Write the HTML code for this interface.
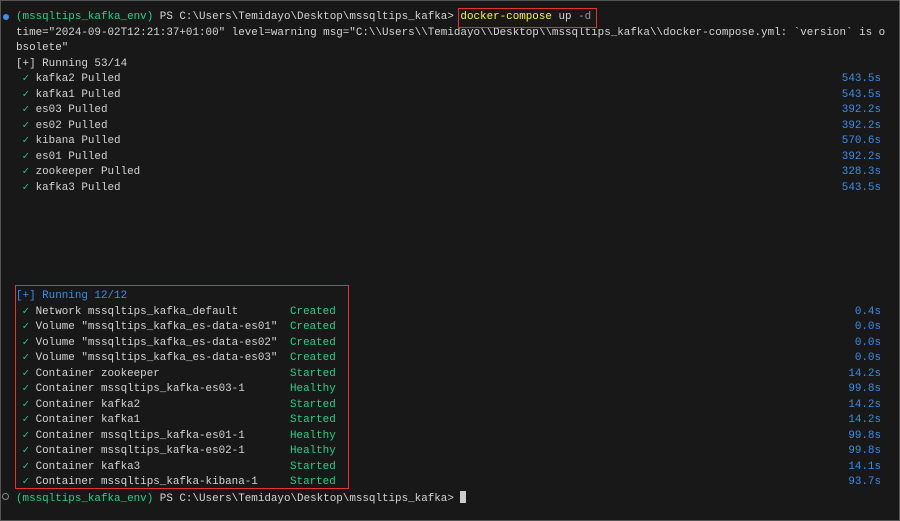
<!DOCTYPE html>
<html><head><style>
body{margin:0;width:900px;height:521px;background:#181818;overflow:hidden;position:relative;font-family:"Liberation Mono",monospace;font-size:10.9px;color:#d4d4d4}
.l{position:absolute;left:16px;height:15.5px;line-height:15.5px;white-space:pre}
.r{position:absolute;right:19px;height:15.5px;line-height:15.5px;color:#3b8eea;white-space:pre}
.s{position:absolute;left:290px;height:15.5px;line-height:15.5px;color:#23d18b;white-space:pre}
.g{color:#23d18b}.b{color:#3b8eea}.y{color:#f5f543}
.c{color:#23d18b;font-weight:bold;display:inline-block;width:6.54px;line-height:10px;overflow:visible}
.box{position:absolute;border:1.5px solid #e5322f}
.frame{position:absolute;left:0;top:0;width:898px;height:519px;border:1px solid #555}
#w{position:absolute;left:0;top:1px;width:900px;height:520px}
</style></head><body>
<div class="frame"></div>
<div style="position:absolute;left:3px;top:14px;width:6px;height:6px;border-radius:50%;background:#3b8eea"></div>
<div id="w">
<div class="l" style="top:9px"><span class="g">(mssqltips_kafka_env)</span> PS C:\Users\Temidayo\Desktop\mssqltips_kafka> <span class="y">docker-compose</span> up <span style="color:#999">-d</span></div>
<div class="l" style="top:24.5px">time="2024-09-02T12:21:37+01:00" level=warning msg="C:\\Users\\Temidayo\\Desktop\\mssqltips_kafka\\docker-compose.yml: `version` is o</div>
<div class="l" style="top:40px">bsolete"</div>
<div class="l" style="top:55.5px">[+] Running 53/14</div>
<div class="l" style="top:71px"> <span class="c">✓</span> kafka2 Pulled</div><div class="r" style="top:71px">543.5s</div>
<div class="l" style="top:86.5px"> <span class="c">✓</span> kafka1 Pulled</div><div class="r" style="top:86.5px">543.5s</div>
<div class="l" style="top:102px"> <span class="c">✓</span> es03 Pulled</div><div class="r" style="top:102px">392.2s</div>
<div class="l" style="top:117.5px"> <span class="c">✓</span> es02 Pulled</div><div class="r" style="top:117.5px">392.2s</div>
<div class="l" style="top:133px"> <span class="c">✓</span> kibana Pulled</div><div class="r" style="top:133px">570.6s</div>
<div class="l" style="top:148.5px"> <span class="c">✓</span> es01 Pulled</div><div class="r" style="top:148.5px">392.2s</div>
<div class="l" style="top:164px"> <span class="c">✓</span> zookeeper Pulled</div><div class="r" style="top:164px">328.3s</div>
<div class="l" style="top:179.5px"> <span class="c">✓</span> kafka3 Pulled</div><div class="r" style="top:179.5px">543.5s</div>

<div class="l b" style="top:288px">[+] Running 12/12</div>
<div class="l" style="top:303.5px"> <span class="c">✓</span> Network mssqltips_kafka_default</div><div class="s" style="top:303.5px">Created</div><div class="r" style="top:303.5px">0.4s</div>
<div class="l" style="top:319px"> <span class="c">✓</span> Volume "mssqltips_kafka_es-data-es01"</div><div class="s" style="top:319px">Created</div><div class="r" style="top:319px">0.0s</div>
<div class="l" style="top:334.5px"> <span class="c">✓</span> Volume "mssqltips_kafka_es-data-es02"</div><div class="s" style="top:334.5px">Created</div><div class="r" style="top:334.5px">0.0s</div>
<div class="l" style="top:350px"> <span class="c">✓</span> Volume "mssqltips_kafka_es-data-es03"</div><div class="s" style="top:350px">Created</div><div class="r" style="top:350px">0.0s</div>
<div class="l" style="top:365.5px"> <span class="c">✓</span> Container zookeeper</div><div class="s" style="top:365.5px">Started</div><div class="r" style="top:365.5px">14.2s</div>
<div class="l" style="top:381px"> <span class="c">✓</span> Container mssqltips_kafka-es03-1</div><div class="s" style="top:381px">Healthy</div><div class="r" style="top:381px">99.8s</div>
<div class="l" style="top:396.5px"> <span class="c">✓</span> Container kafka2</div><div class="s" style="top:396.5px">Started</div><div class="r" style="top:396.5px">14.2s</div>
<div class="l" style="top:412px"> <span class="c">✓</span> Container kafka1</div><div class="s" style="top:412px">Started</div><div class="r" style="top:412px">14.2s</div>
<div class="l" style="top:427.5px"> <span class="c">✓</span> Container mssqltips_kafka-es01-1</div><div class="s" style="top:427.5px">Healthy</div><div class="r" style="top:427.5px">99.8s</div>
<div class="l" style="top:443px"> <span class="c">✓</span> Container mssqltips_kafka-es02-1</div><div class="s" style="top:443px">Healthy</div><div class="r" style="top:443px">99.8s</div>
<div class="l" style="top:458.5px"> <span class="c">✓</span> Container kafka3</div><div class="s" style="top:458.5px">Started</div><div class="r" style="top:458.5px">14.1s</div>
<div class="l" style="top:474px"> <span class="c">✓</span> Container mssqltips_kafka-kibana-1</div><div class="s" style="top:474px">Started</div><div class="r" style="top:474px">93.7s</div>
<div class="l" style="top:489.5px"><span class="g">(mssqltips_kafka_env)</span> PS C:\Users\Temidayo\Desktop\mssqltips_kafka> <span style="display:inline-block;width:6px;height:12px;background:#ccc;vertical-align:-2px"></span></div>
</div>
<div style="position:absolute;left:2px;top:493px;width:5px;height:5px;border-radius:50%;border:1px solid #888"></div>
<div class="box" style="left:458px;top:8px;width:137px;height:18px"></div>
<div class="box" style="left:15px;top:285px;width:332px;height:202px"></div>
</body></html>
